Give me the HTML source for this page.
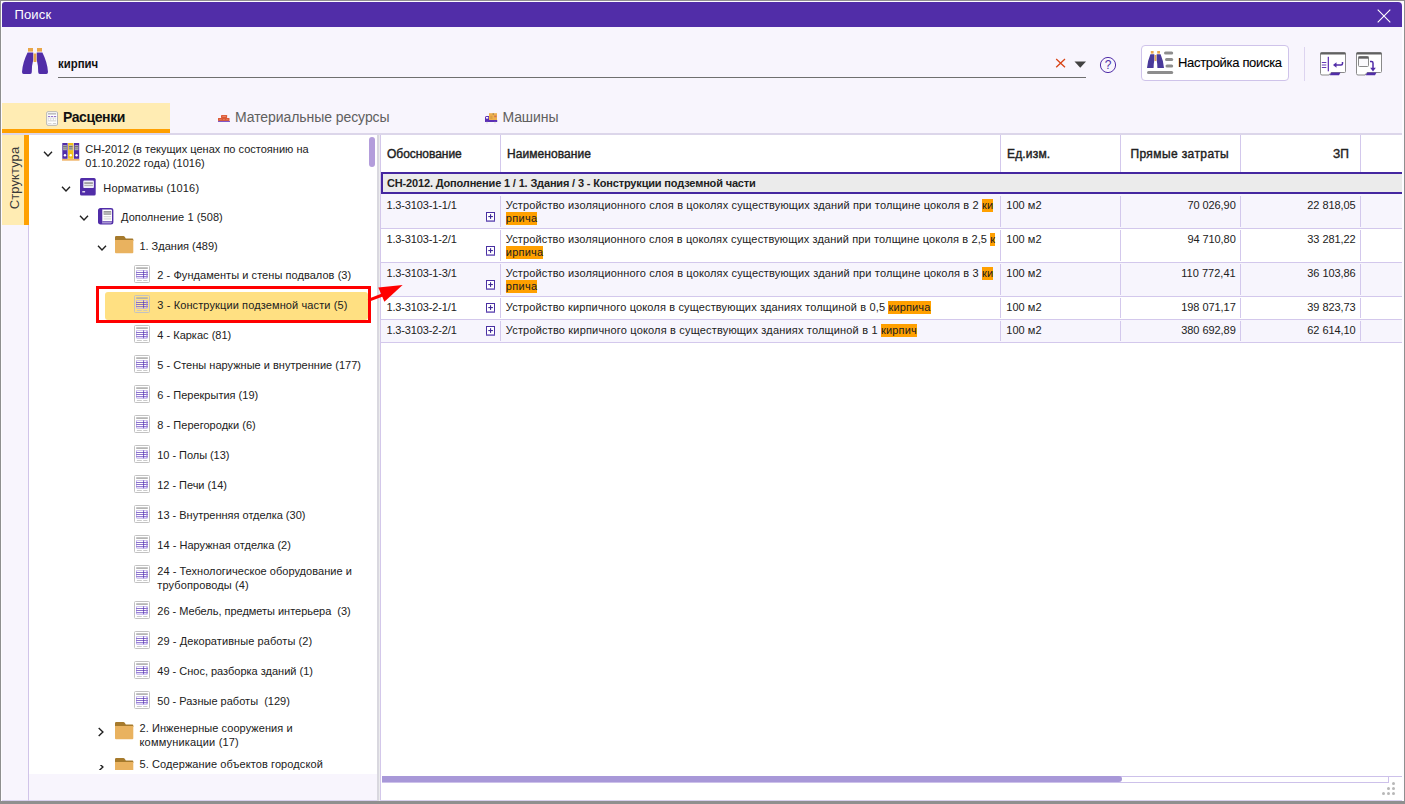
<!DOCTYPE html>
<html lang="ru">
<head>
<meta charset="utf-8">
<title>Поиск</title>
<style>
html,body{margin:0;padding:0;}
body{width:1405px;height:804px;overflow:hidden;position:relative;background:#8f8f8f;font-family:"Liberation Sans",sans-serif;color:#212121;}
.a{position:absolute;}
.t{position:absolute;white-space:pre;color:#212121;}
.hl{background:#ffa000;padding-bottom:1px;}
svg{position:absolute;overflow:visible;}
</style>
</head>
<body>
<div class="a" style="left:1px;top:1px;width:1403px;height:800px;background:#fdfcff;"></div>
<div class="a" style="left:2px;top:2px;width:1400px;height:799px;background:#f8f5fd;"></div>
<div class="a" style="left:2px;top:2px;width:1400px;height:25px;background:#512da8;border-radius:3px 4px 0 0;"></div>
<svg style="left:1377px;top:9px" width="14" height="14" viewBox="0 0 14 14"><path d="M0.7 0.7 L13.3 13.3 M13.3 0.7 L0.7 13.3" stroke="#fff" stroke-width="1.1" fill="none"/></svg>
<div class="a" style="left:2px;top:800px;width:1400px;height:1px;background:#d9d0ee;"></div>
<svg style="left:22px;top:48px" width="26" height="26" viewBox="0 0 26 26"><rect x="6" y="0" width="5" height="3.6" fill="#e8a64a"/><rect x="15" y="0" width="5" height="3.6" fill="#e8a64a"/>
<rect x="11.6" y="5.5" width="2.8" height="8.5" fill="#e8a64a"/>
<path d="M5.6 4.6 H11.2 V12 Q9.8 17 9.8 24 Q9.8 26 8.2 26 H1.6 Q0 26 0 24 Q0.6 14.500 5.6 4.6 Z" fill="#512da8"/>
<path d="M20.4 4.6 H14.8 V12 Q16.2 17 16.2 24 Q16.2 26 17.8 26 H24.4 Q26 26 26 24 Q25.4 14.500 20.4 4.6 Z" fill="#512da8"/></svg>
<div class="a" style="left:58px;top:77px;width:1028px;height:1px;background:#6f6f6f;"></div>
<svg style="left:1055px;top:58px" width="11" height="10" viewBox="0 0 11 10"><path d="M1.2 1 L10 9.2 M10 1 L1.2 9.2" stroke="#d84315" stroke-width="1.3" fill="none"/></svg>
<svg style="left:1074px;top:60.5px" width="13" height="7" viewBox="0 0 13 7"><path d="M0.5 0.5 H12 L6.25 6.8 Z" fill="#424242"/></svg>
<svg style="left:1099px;top:56px" width="18" height="18" viewBox="0 0 18 18"><circle cx="9" cy="9" r="7.6" fill="none" stroke="#512da8" stroke-width="1"/><text x="9" y="13.2" font-family="Liberation Sans, sans-serif" font-size="12" text-anchor="middle" fill="#512da8">?</text></svg>
<div class="a" style="left:1141px;top:45px;width:146px;height:34px;background:#fff;border:1px solid #cfc3ea;border-radius:4px;"></div>
<svg style="left:1147px;top:51px" width="27" height="24" viewBox="0 0 27 24"><rect x="3.8" y="0" width="2.8" height="2.6" fill="#e8a64a"/><rect x="10.2" y="0" width="2.8" height="2.6" fill="#e8a64a"/>
<rect x="7.6" y="4" width="1.8" height="6" fill="#e8a64a"/>
<path d="M3.4 3.2 H7.3 V9 Q6.6 13 6.6 17 H0 Q0.5 10 3.4 3.200 Z" fill="#4a3a9a"/>
<path d="M13.6 3.2 H9.7 V9 Q10.4 13 10.4 17 H17 Q16.500 10 13.600 3.200 Z" fill="#4a3a9a"/>
<rect x="17" y="0.5" width="9.2" height="3" rx="1.500" fill="#8d8d8d"/>
<rect x="18" y="7" width="8.2" height="3" rx="1.500" fill="#8d8d8d"/>
<rect x="18.5" y="13.500" width="7.7" height="3" rx="1.500" fill="#8d8d8d"/>
<rect x="0" y="20" width="26.2" height="3" rx="1.500" fill="#8d8d8d"/></svg>
<div class="a" style="left:1304px;top:47px;width:1px;height:34px;background:#ddd4f0;"></div>
<svg style="left:1320px;top:52px" width="26" height="24" viewBox="0 0 26 24"><path d="M0.5 2 Q0.5 0.5 2 0.5 H24 Q25.5 0.5 25.5 2 V19.5 Q25.5 20.5 24.5 20.5 H11 L9 23 H2 Q0.5 23 0.5 21.5 Z" fill="#fff" stroke="#8a8a8a" stroke-width="1"/>
<rect x="0.5" y="0.5" width="25" height="2" fill="#616161"/>
<path d="M11.500 20.500 H20.500 L19 23.3 H9.500 Z" fill="#512da8"/><rect x="7.700" y="4.800" width="1.300" height="14.500" fill="#673ab7"/>
<rect x="1.800" y="10" width="4.500" height="1" fill="#673ab7"/><rect x="1.800" y="12.500" width="4.500" height="1" fill="#673ab7"/><rect x="1.800" y="15" width="4.500" height="1" fill="#673ab7"/>
<path d="M22.500 10 V11.500 Q22.500 13 21 13 H16" stroke="#512da8" stroke-width="1.500" fill="none"/><path d="M13 13 L16.500 10.200 V15.800 Z" fill="#512da8"/></svg>
<svg style="left:1356px;top:52px" width="26" height="24" viewBox="0 0 26 24"><path d="M0.5 2 Q0.5 0.5 2 0.5 H24 Q25.5 0.5 25.5 2 V19.5 Q25.5 20.5 24.5 20.5 H11 L9 23 H2 Q0.5 23 0.5 21.5 Z" fill="#fff" stroke="#8a8a8a" stroke-width="1"/>
<rect x="0.5" y="0.5" width="25" height="2" fill="#616161"/>
<path d="M11.500 20.500 H20.500 L19 23.3 H9.500 Z" fill="#512da8"/><rect x="2.500" y="4.500" width="10" height="10" rx="1" fill="#fbfafd" stroke="#8a8a8a" stroke-width="1"/><rect x="2.500" y="4.500" width="10" height="2.200" fill="#616161"/>
<path d="M14 9.500 H15.500 Q17 9.500 17 11 V16" stroke="#512da8" stroke-width="1.500" fill="none"/><path d="M17 19.500 L14.200 15.800 H19.800 Z" fill="#512da8"/></svg>
<div class="a" style="left:2px;top:103px;width:168px;height:26px;background:#ffecb3;"></div>
<div class="a" style="left:2px;top:129px;width:168px;height:4px;background:#ffa000;"></div>
<div class="a" style="left:2px;top:133px;width:1400px;height:2px;background:#dcd6ea;"></div>
<svg style="left:46px;top:111px" width="12" height="15" viewBox="0 0 12 15"><rect x="0.700" y="0.700" width="10.800" height="13.600" rx="1.200" fill="#fff" stroke="#b4b4b4" stroke-width="1"/>
<rect x="2" y="2.200" width="8.200" height="1.300" fill="#b0b0b0"/>
<rect x="2" y="5" width="2.200" height="1" fill="#9575cd"/><rect x="5" y="5" width="2.200" height="1" fill="#9575cd"/><rect x="8" y="5" width="2.200" height="1" fill="#9575cd"/>
<rect x="2" y="6.500" width="8.200" height="4" fill="#dcdcdc"/>
<rect x="2.700" y="7.400" width="1.500" height="1.800" fill="#fff"/><rect x="5.300" y="7.400" width="1.500" height="1.800" fill="#fff"/><rect x="8" y="7.400" width="1.500" height="1.800" fill="#fff"/>
<rect x="2" y="12" width="3.500" height="0.800" fill="#d0d0d0"/><rect x="6.800" y="12" width="3.400" height="0.800" fill="#c4c4c4"/></svg>
<svg style="left:217.9px;top:115px" width="12" height="7" viewBox="0 0 12 7"><rect x="3" y="0" width="6.100" height="3" rx="0.400" fill="#dc5a36"/><rect x="4.300" y="0.900" width="3.600" height="0.700" fill="#f0a088"/>
<rect x="0" y="2.900" width="11.500" height="3.100" rx="0.400" fill="#dc5a36"/><rect x="1.200" y="4.200" width="2.400" height="0.600" fill="#ea8a70"/><rect x="5" y="4.200" width="1.800" height="0.600" fill="#ea8a70"/><rect x="8.200" y="4.200" width="2" height="0.600" fill="#ea8a70"/>
<rect x="0" y="5.900" width="12" height="1.100" fill="#8057c8"/></svg>
<svg style="left:485px;top:113px" width="12.5" height="11" viewBox="0 0 12.5 11"><rect x="4" y="0.200" width="8" height="6.800" fill="#eeb04e"/><rect x="5.300" y="2.800" width="2.200" height="3.200" fill="#d9a045"/><rect x="9.200" y="2.600" width="2.300" height="1.600" fill="#d0705a"/><rect x="7.700" y="0.200" width="1" height="1.600" fill="#8d7a55"/>
<path d="M0 4.500 Q0 3 1.500 3 H4 V7 H12.200 V9.100 H0 Z" fill="#5b2fb5"/><rect x="1" y="4" width="2.200" height="1.600" fill="#fbf9ff"/>
<circle cx="2" cy="9.700" r="1" fill="#e6e6e0"/><circle cx="10" cy="9.700" r="1" fill="#e6e6e0"/></svg>
<div class="a" style="left:2px;top:135px;width:27px;height:90px;background:#ffecb3;"></div>
<div class="a" style="left:24.2px;top:135px;width:4.8px;height:90px;background:#ffa000;"></div>
<div class="t" style="left:-17px;top:169.5px;width:64px;height:16px;font-size:13px;line-height:16px;text-align:center;letter-spacing:0.1px;color:#3a3a3a;transform:rotate(-90deg);transform-origin:50% 50%;">Структура</div>
<div class="a" style="left:28px;top:225px;width:1px;height:576px;background:#d1c4e9;"></div>
<div class="a" style="left:29px;top:135px;width:348px;height:638.5px;background:#fff;"></div>
<div class="a" style="left:369px;top:137px;width:6px;height:29.5px;background:#b39ddb;border-radius:3px;"></div>
<div class="a" style="left:377px;top:135px;width:2px;height:666px;background:#d9d8df;"></div>
<div class="a" style="left:379px;top:135px;width:1px;height:666px;background:#ececee;"></div>
<div class="a" style="left:380.5px;top:135px;width:1021.5px;height:665px;background:#fff;"></div>
<div class="a" style="left:380px;top:135px;width:1px;height:665px;background:#d3c7ea;"></div>
<div class="a" style="left:105px;top:291.6px;width:262.5px;height:28px;background:#ffe082;border-radius:3px;"></div>
<svg style="left:42.5px;top:150.3px" width="10" height="8" viewBox="0 0 10 8"><path d="M1 1.700 L5 5.900 L9 1.700" stroke="#212121" stroke-width="1.400" fill="none"/></svg>
<svg style="left:60.6px;top:185.3px" width="10" height="8" viewBox="0 0 10 8"><path d="M1 1.700 L5 5.900 L9 1.700" stroke="#212121" stroke-width="1.400" fill="none"/></svg>
<svg style="left:78.6px;top:214.4px" width="10" height="8" viewBox="0 0 10 8"><path d="M1 1.700 L5 5.900 L9 1.700" stroke="#212121" stroke-width="1.400" fill="none"/></svg>
<svg style="left:96.6px;top:243.5px" width="10" height="8" viewBox="0 0 10 8"><path d="M1 1.700 L5 5.900 L9 1.700" stroke="#212121" stroke-width="1.400" fill="none"/></svg>
<svg style="left:96.7px;top:727.4px" width="8" height="10" viewBox="0 0 8 10"><path d="M1.700 1 L5.900 5 L1.700 9" stroke="#212121" stroke-width="1.400" fill="none"/></svg>
<div class="a" style="left:96px;top:764.600px;width:10px;height:5.400px;overflow:hidden;"><svg style="left:0.700px;top:-3.100px" width="8" height="10" viewBox="0 0 8 10"><path d="M1.700 1 L5.900 5 L1.700 9" stroke="#212121" stroke-width="1.400" fill="none"/></svg></div>
<svg style="left:61.5px;top:143px" width="17.5" height="18" viewBox="0 0 17.5 18"><rect x="0.3" y="0" width="5.300" height="15.800" fill="#512da8"/><rect x="6.100" y="0" width="5.300" height="15.800" fill="#f2c21a"/><rect x="11.900" y="0" width="5.300" height="15.800" fill="#512da8"/>
<rect x="1.100" y="2.200" width="3.700" height="5" fill="#bdbdbd"/><rect x="6.900" y="2.200" width="3.700" height="5" fill="#bdbdbd"/><rect x="12.700" y="2.200" width="3.700" height="5" fill="#bdbdbd"/>
<rect x="1.100" y="3.200" width="3.700" height="1.100" fill="#616161"/><rect x="6.900" y="3.200" width="3.700" height="1.100" fill="#616161"/><rect x="12.700" y="3.200" width="3.700" height="1.100" fill="#616161"/>
<rect x="1.100" y="5.400" width="3.700" height="0.900" fill="#757575"/><rect x="6.900" y="5.400" width="3.700" height="0.900" fill="#757575"/><rect x="12.700" y="5.400" width="3.700" height="0.900" fill="#757575"/>
<circle cx="2.950" cy="12.300" r="1.200" fill="#fff"/><circle cx="8.750" cy="12.300" r="1.200" fill="#fff"/><circle cx="14.550" cy="12.300" r="1.200" fill="#fff"/>
<rect x="0" y="16" width="17.500" height="1.700" fill="#f0b468"/></svg>
<svg style="left:79.6px;top:178px" width="16" height="17.5" viewBox="0 0 16 17.5"><rect x="0" y="0" width="15.700" height="17.400" rx="1.500" fill="#512da8"/>
<rect x="3.300" y="2.600" width="10.600" height="7.400" rx="0.800" fill="#f1effa"/><rect x="4.300" y="4.300" width="8.600" height="1.500" fill="#8c8c8c"/><rect x="4.300" y="6.800" width="8.600" height="1.300" fill="#b5b5b5"/>
<rect x="2.300" y="13.200" width="2.800" height="1.200" fill="#fff"/></svg>
<svg style="left:98.2px;top:207.8px" width="15.5" height="16.8" viewBox="0 0 15.5 16.8"><rect x="0.700" y="0.700" width="14" height="15.200" rx="1.800" fill="#fff" stroke="#512da8" stroke-width="1.400"/>
<rect x="0.700" y="0.700" width="3.600" height="15.200" rx="1.200" fill="#512da8"/>
<rect x="5.600" y="3" width="7.600" height="3.800" fill="#9a9a9a"/><rect x="5.600" y="4.600" width="7.600" height="0.800" fill="#dcdcdc"/>
<rect x="5.600" y="8.300" width="7.600" height="0.900" fill="#c9c9c9"/><rect x="5.600" y="10.500" width="7.600" height="0.900" fill="#c9c9c9"/>
<rect x="4.300" y="13.300" width="10" height="1.200" fill="#512da8"/></svg>
<svg style="left:114.8px;top:235.9px" width="18.5" height="17.5" viewBox="0 0 18.5 17.5"><path d="M0 1.200 Q0 0 1.200 0 H8.300 Q9.300 0 9.900 1 L10.800 2.400 H17.300 Q18.300 2.400 18.300 3.400 V5 H0 Z" fill="#a67a2c"/>
<path d="M0 4 H18.300 V16.200 Q18.300 17.200 17.300 17.200 H1 Q0 17.200 0 16.200 Z" fill="#e9b25f"/></svg>
<svg style="left:114.8px;top:721.9px" width="18.5" height="17.5" viewBox="0 0 18.5 17.5"><path d="M0 1.200 Q0 0 1.200 0 H8.300 Q9.300 0 9.900 1 L10.800 2.400 H17.300 Q18.300 2.400 18.300 3.400 V5 H0 Z" fill="#a67a2c"/>
<path d="M0 4 H18.300 V16.200 Q18.300 17.200 17.300 17.200 H1 Q0 17.200 0 16.200 Z" fill="#e9b25f"/></svg>
<div class="a" style="left:114.800px;top:758.100px;width:19px;height:11.700px;overflow:hidden;"><svg style="left:0;top:0" width="18.500" height="17.500" viewBox="0 0 18.500 17.500"><path d="M0 1.200 Q0 0 1.200 0 H8.300 Q9.300 0 9.900 1 L10.800 2.400 H17.300 Q18.300 2.400 18.300 3.400 V5 H0 Z" fill="#a67a2c"/><path d="M0 4 H18.300 V16.200 Q18.300 17.200 17.300 17.200 H1 Q0 17.200 0 16.200 Z" fill="#e9b25f"/></svg></div>
<svg style="left:134px;top:265px" width="16" height="18" viewBox="0 0 16 18"><rect x="0.500" y="0.500" width="15" height="17" rx="1" fill="#fff" stroke="#c2c2c2" stroke-width="1"/>
<rect x="2.200" y="2.300" width="11.600" height="1.600" fill="#adadad"/>
<rect x="2.100" y="4.900" width="11.800" height="8.800" rx="1.200" fill="#bfb0ea"/>
<rect x="2.300" y="7.100" width="11.400" height="0.800" fill="#5e3cb6"/><rect x="2.300" y="9.100" width="11.400" height="0.800" fill="#5e3cb6"/><rect x="2.300" y="11.100" width="11.400" height="0.800" fill="#7657c6"/>
<rect x="9.200" y="5.400" width="0.900" height="7.800" fill="#5e3cb6"/><rect x="12.400" y="6" width="0.700" height="7" fill="#9a84da"/>
<rect x="3" y="5.700" width="6.200" height="1.400" fill="#fff"/><rect x="10.100" y="5.700" width="2.300" height="1.400" fill="#fff"/>
<rect x="3" y="7.900" width="6.200" height="1.200" fill="#fff"/><rect x="10.100" y="7.900" width="2.300" height="1.200" fill="#fff"/>
<rect x="3" y="9.900" width="6.200" height="1.200" fill="#fff"/><rect x="10.100" y="9.900" width="2.300" height="1.200" fill="#fff"/>
<rect x="3" y="11.900" width="6.200" height="0.900" fill="#e9e2f9"/><rect x="10.100" y="11.900" width="2.300" height="0.900" fill="#e9e2f9"/>
<rect x="2.800" y="15" width="5" height="0.900" fill="#c6c6c6"/><rect x="9.200" y="15" width="4.200" height="0.900" fill="#c6c6c6"/></svg>
<svg style="left:134px;top:295px" width="16" height="18" viewBox="0 0 16 18"><rect x="0.500" y="0.500" width="15" height="17" rx="1" fill="none" stroke="#c2c2c2" stroke-width="1"/>
<rect x="2.200" y="2.300" width="11.600" height="1.600" fill="#adadad"/>
<rect x="2.100" y="4.900" width="11.800" height="8.800" rx="1.200" fill="#bfb0ea"/>
<rect x="2.300" y="7.100" width="11.400" height="0.800" fill="#5e3cb6"/><rect x="2.300" y="9.100" width="11.400" height="0.800" fill="#5e3cb6"/><rect x="2.300" y="11.100" width="11.400" height="0.800" fill="#7657c6"/>
<rect x="9.200" y="5.400" width="0.900" height="7.800" fill="#5e3cb6"/><rect x="12.400" y="6" width="0.700" height="7" fill="#9a84da"/>
<rect x="3" y="5.700" width="6.200" height="1.400" fill="#ffe9a0"/><rect x="10.100" y="5.700" width="2.300" height="1.400" fill="#ffe9a0"/>
<rect x="3" y="7.900" width="6.200" height="1.200" fill="#ffe9a0"/><rect x="10.100" y="7.900" width="2.300" height="1.200" fill="#ffe9a0"/>
<rect x="3" y="9.900" width="6.200" height="1.200" fill="#ffe9a0"/><rect x="10.100" y="9.900" width="2.300" height="1.200" fill="#ffe9a0"/>
<rect x="3" y="11.900" width="6.200" height="0.900" fill="#f3dc9a"/><rect x="10.100" y="11.900" width="2.300" height="0.900" fill="#f3dc9a"/>
<rect x="2.800" y="15" width="5" height="0.900" fill="#c6c6c6"/><rect x="9.200" y="15" width="4.200" height="0.900" fill="#c6c6c6"/></svg>
<svg style="left:134px;top:325px" width="16" height="18" viewBox="0 0 16 18"><rect x="0.500" y="0.500" width="15" height="17" rx="1" fill="#fff" stroke="#c2c2c2" stroke-width="1"/>
<rect x="2.200" y="2.300" width="11.600" height="1.600" fill="#adadad"/>
<rect x="2.100" y="4.900" width="11.800" height="8.800" rx="1.200" fill="#bfb0ea"/>
<rect x="2.300" y="7.100" width="11.400" height="0.800" fill="#5e3cb6"/><rect x="2.300" y="9.100" width="11.400" height="0.800" fill="#5e3cb6"/><rect x="2.300" y="11.100" width="11.400" height="0.800" fill="#7657c6"/>
<rect x="9.200" y="5.400" width="0.900" height="7.800" fill="#5e3cb6"/><rect x="12.400" y="6" width="0.700" height="7" fill="#9a84da"/>
<rect x="3" y="5.700" width="6.200" height="1.400" fill="#fff"/><rect x="10.100" y="5.700" width="2.300" height="1.400" fill="#fff"/>
<rect x="3" y="7.900" width="6.200" height="1.200" fill="#fff"/><rect x="10.100" y="7.900" width="2.300" height="1.200" fill="#fff"/>
<rect x="3" y="9.900" width="6.200" height="1.200" fill="#fff"/><rect x="10.100" y="9.900" width="2.300" height="1.200" fill="#fff"/>
<rect x="3" y="11.900" width="6.200" height="0.900" fill="#e9e2f9"/><rect x="10.100" y="11.900" width="2.300" height="0.900" fill="#e9e2f9"/>
<rect x="2.800" y="15" width="5" height="0.900" fill="#c6c6c6"/><rect x="9.200" y="15" width="4.200" height="0.900" fill="#c6c6c6"/></svg>
<svg style="left:134px;top:355px" width="16" height="18" viewBox="0 0 16 18"><rect x="0.500" y="0.500" width="15" height="17" rx="1" fill="#fff" stroke="#c2c2c2" stroke-width="1"/>
<rect x="2.200" y="2.300" width="11.600" height="1.600" fill="#adadad"/>
<rect x="2.100" y="4.900" width="11.800" height="8.800" rx="1.200" fill="#bfb0ea"/>
<rect x="2.300" y="7.100" width="11.400" height="0.800" fill="#5e3cb6"/><rect x="2.300" y="9.100" width="11.400" height="0.800" fill="#5e3cb6"/><rect x="2.300" y="11.100" width="11.400" height="0.800" fill="#7657c6"/>
<rect x="9.200" y="5.400" width="0.900" height="7.800" fill="#5e3cb6"/><rect x="12.400" y="6" width="0.700" height="7" fill="#9a84da"/>
<rect x="3" y="5.700" width="6.200" height="1.400" fill="#fff"/><rect x="10.100" y="5.700" width="2.300" height="1.400" fill="#fff"/>
<rect x="3" y="7.900" width="6.200" height="1.200" fill="#fff"/><rect x="10.100" y="7.900" width="2.300" height="1.200" fill="#fff"/>
<rect x="3" y="9.900" width="6.200" height="1.200" fill="#fff"/><rect x="10.100" y="9.900" width="2.300" height="1.200" fill="#fff"/>
<rect x="3" y="11.900" width="6.200" height="0.900" fill="#e9e2f9"/><rect x="10.100" y="11.900" width="2.300" height="0.900" fill="#e9e2f9"/>
<rect x="2.800" y="15" width="5" height="0.900" fill="#c6c6c6"/><rect x="9.200" y="15" width="4.200" height="0.900" fill="#c6c6c6"/></svg>
<svg style="left:134px;top:385px" width="16" height="18" viewBox="0 0 16 18"><rect x="0.500" y="0.500" width="15" height="17" rx="1" fill="#fff" stroke="#c2c2c2" stroke-width="1"/>
<rect x="2.200" y="2.300" width="11.600" height="1.600" fill="#adadad"/>
<rect x="2.100" y="4.900" width="11.800" height="8.800" rx="1.200" fill="#bfb0ea"/>
<rect x="2.300" y="7.100" width="11.400" height="0.800" fill="#5e3cb6"/><rect x="2.300" y="9.100" width="11.400" height="0.800" fill="#5e3cb6"/><rect x="2.300" y="11.100" width="11.400" height="0.800" fill="#7657c6"/>
<rect x="9.200" y="5.400" width="0.900" height="7.800" fill="#5e3cb6"/><rect x="12.400" y="6" width="0.700" height="7" fill="#9a84da"/>
<rect x="3" y="5.700" width="6.200" height="1.400" fill="#fff"/><rect x="10.100" y="5.700" width="2.300" height="1.400" fill="#fff"/>
<rect x="3" y="7.900" width="6.200" height="1.200" fill="#fff"/><rect x="10.100" y="7.900" width="2.300" height="1.200" fill="#fff"/>
<rect x="3" y="9.900" width="6.200" height="1.200" fill="#fff"/><rect x="10.100" y="9.900" width="2.300" height="1.200" fill="#fff"/>
<rect x="3" y="11.900" width="6.200" height="0.900" fill="#e9e2f9"/><rect x="10.100" y="11.900" width="2.300" height="0.900" fill="#e9e2f9"/>
<rect x="2.800" y="15" width="5" height="0.900" fill="#c6c6c6"/><rect x="9.200" y="15" width="4.200" height="0.900" fill="#c6c6c6"/></svg>
<svg style="left:134px;top:415px" width="16" height="18" viewBox="0 0 16 18"><rect x="0.500" y="0.500" width="15" height="17" rx="1" fill="#fff" stroke="#c2c2c2" stroke-width="1"/>
<rect x="2.200" y="2.300" width="11.600" height="1.600" fill="#adadad"/>
<rect x="2.100" y="4.900" width="11.800" height="8.800" rx="1.200" fill="#bfb0ea"/>
<rect x="2.300" y="7.100" width="11.400" height="0.800" fill="#5e3cb6"/><rect x="2.300" y="9.100" width="11.400" height="0.800" fill="#5e3cb6"/><rect x="2.300" y="11.100" width="11.400" height="0.800" fill="#7657c6"/>
<rect x="9.200" y="5.400" width="0.900" height="7.800" fill="#5e3cb6"/><rect x="12.400" y="6" width="0.700" height="7" fill="#9a84da"/>
<rect x="3" y="5.700" width="6.200" height="1.400" fill="#fff"/><rect x="10.100" y="5.700" width="2.300" height="1.400" fill="#fff"/>
<rect x="3" y="7.900" width="6.200" height="1.200" fill="#fff"/><rect x="10.100" y="7.900" width="2.300" height="1.200" fill="#fff"/>
<rect x="3" y="9.900" width="6.200" height="1.200" fill="#fff"/><rect x="10.100" y="9.900" width="2.300" height="1.200" fill="#fff"/>
<rect x="3" y="11.900" width="6.200" height="0.900" fill="#e9e2f9"/><rect x="10.100" y="11.900" width="2.300" height="0.900" fill="#e9e2f9"/>
<rect x="2.800" y="15" width="5" height="0.900" fill="#c6c6c6"/><rect x="9.200" y="15" width="4.200" height="0.900" fill="#c6c6c6"/></svg>
<svg style="left:134px;top:445px" width="16" height="18" viewBox="0 0 16 18"><rect x="0.500" y="0.500" width="15" height="17" rx="1" fill="#fff" stroke="#c2c2c2" stroke-width="1"/>
<rect x="2.200" y="2.300" width="11.600" height="1.600" fill="#adadad"/>
<rect x="2.100" y="4.900" width="11.800" height="8.800" rx="1.200" fill="#bfb0ea"/>
<rect x="2.300" y="7.100" width="11.400" height="0.800" fill="#5e3cb6"/><rect x="2.300" y="9.100" width="11.400" height="0.800" fill="#5e3cb6"/><rect x="2.300" y="11.100" width="11.400" height="0.800" fill="#7657c6"/>
<rect x="9.200" y="5.400" width="0.900" height="7.800" fill="#5e3cb6"/><rect x="12.400" y="6" width="0.700" height="7" fill="#9a84da"/>
<rect x="3" y="5.700" width="6.200" height="1.400" fill="#fff"/><rect x="10.100" y="5.700" width="2.300" height="1.400" fill="#fff"/>
<rect x="3" y="7.900" width="6.200" height="1.200" fill="#fff"/><rect x="10.100" y="7.900" width="2.300" height="1.200" fill="#fff"/>
<rect x="3" y="9.900" width="6.200" height="1.200" fill="#fff"/><rect x="10.100" y="9.900" width="2.300" height="1.200" fill="#fff"/>
<rect x="3" y="11.900" width="6.200" height="0.900" fill="#e9e2f9"/><rect x="10.100" y="11.900" width="2.300" height="0.900" fill="#e9e2f9"/>
<rect x="2.800" y="15" width="5" height="0.900" fill="#c6c6c6"/><rect x="9.200" y="15" width="4.200" height="0.900" fill="#c6c6c6"/></svg>
<svg style="left:134px;top:475px" width="16" height="18" viewBox="0 0 16 18"><rect x="0.500" y="0.500" width="15" height="17" rx="1" fill="#fff" stroke="#c2c2c2" stroke-width="1"/>
<rect x="2.200" y="2.300" width="11.600" height="1.600" fill="#adadad"/>
<rect x="2.100" y="4.900" width="11.800" height="8.800" rx="1.200" fill="#bfb0ea"/>
<rect x="2.300" y="7.100" width="11.400" height="0.800" fill="#5e3cb6"/><rect x="2.300" y="9.100" width="11.400" height="0.800" fill="#5e3cb6"/><rect x="2.300" y="11.100" width="11.400" height="0.800" fill="#7657c6"/>
<rect x="9.200" y="5.400" width="0.900" height="7.800" fill="#5e3cb6"/><rect x="12.400" y="6" width="0.700" height="7" fill="#9a84da"/>
<rect x="3" y="5.700" width="6.200" height="1.400" fill="#fff"/><rect x="10.100" y="5.700" width="2.300" height="1.400" fill="#fff"/>
<rect x="3" y="7.900" width="6.200" height="1.200" fill="#fff"/><rect x="10.100" y="7.900" width="2.300" height="1.200" fill="#fff"/>
<rect x="3" y="9.900" width="6.200" height="1.200" fill="#fff"/><rect x="10.100" y="9.900" width="2.300" height="1.200" fill="#fff"/>
<rect x="3" y="11.900" width="6.200" height="0.900" fill="#e9e2f9"/><rect x="10.100" y="11.900" width="2.300" height="0.900" fill="#e9e2f9"/>
<rect x="2.800" y="15" width="5" height="0.900" fill="#c6c6c6"/><rect x="9.200" y="15" width="4.200" height="0.900" fill="#c6c6c6"/></svg>
<svg style="left:134px;top:505px" width="16" height="18" viewBox="0 0 16 18"><rect x="0.500" y="0.500" width="15" height="17" rx="1" fill="#fff" stroke="#c2c2c2" stroke-width="1"/>
<rect x="2.200" y="2.300" width="11.600" height="1.600" fill="#adadad"/>
<rect x="2.100" y="4.900" width="11.800" height="8.800" rx="1.200" fill="#bfb0ea"/>
<rect x="2.300" y="7.100" width="11.400" height="0.800" fill="#5e3cb6"/><rect x="2.300" y="9.100" width="11.400" height="0.800" fill="#5e3cb6"/><rect x="2.300" y="11.100" width="11.400" height="0.800" fill="#7657c6"/>
<rect x="9.200" y="5.400" width="0.900" height="7.800" fill="#5e3cb6"/><rect x="12.400" y="6" width="0.700" height="7" fill="#9a84da"/>
<rect x="3" y="5.700" width="6.200" height="1.400" fill="#fff"/><rect x="10.100" y="5.700" width="2.300" height="1.400" fill="#fff"/>
<rect x="3" y="7.900" width="6.200" height="1.200" fill="#fff"/><rect x="10.100" y="7.900" width="2.300" height="1.200" fill="#fff"/>
<rect x="3" y="9.900" width="6.200" height="1.200" fill="#fff"/><rect x="10.100" y="9.900" width="2.300" height="1.200" fill="#fff"/>
<rect x="3" y="11.900" width="6.200" height="0.900" fill="#e9e2f9"/><rect x="10.100" y="11.900" width="2.300" height="0.900" fill="#e9e2f9"/>
<rect x="2.800" y="15" width="5" height="0.900" fill="#c6c6c6"/><rect x="9.200" y="15" width="4.200" height="0.900" fill="#c6c6c6"/></svg>
<svg style="left:134px;top:535px" width="16" height="18" viewBox="0 0 16 18"><rect x="0.500" y="0.500" width="15" height="17" rx="1" fill="#fff" stroke="#c2c2c2" stroke-width="1"/>
<rect x="2.200" y="2.300" width="11.600" height="1.600" fill="#adadad"/>
<rect x="2.100" y="4.900" width="11.800" height="8.800" rx="1.200" fill="#bfb0ea"/>
<rect x="2.300" y="7.100" width="11.400" height="0.800" fill="#5e3cb6"/><rect x="2.300" y="9.100" width="11.400" height="0.800" fill="#5e3cb6"/><rect x="2.300" y="11.100" width="11.400" height="0.800" fill="#7657c6"/>
<rect x="9.200" y="5.400" width="0.900" height="7.800" fill="#5e3cb6"/><rect x="12.400" y="6" width="0.700" height="7" fill="#9a84da"/>
<rect x="3" y="5.700" width="6.200" height="1.400" fill="#fff"/><rect x="10.100" y="5.700" width="2.300" height="1.400" fill="#fff"/>
<rect x="3" y="7.900" width="6.200" height="1.200" fill="#fff"/><rect x="10.100" y="7.900" width="2.300" height="1.200" fill="#fff"/>
<rect x="3" y="9.900" width="6.200" height="1.200" fill="#fff"/><rect x="10.100" y="9.900" width="2.300" height="1.200" fill="#fff"/>
<rect x="3" y="11.900" width="6.200" height="0.900" fill="#e9e2f9"/><rect x="10.100" y="11.900" width="2.300" height="0.900" fill="#e9e2f9"/>
<rect x="2.800" y="15" width="5" height="0.900" fill="#c6c6c6"/><rect x="9.200" y="15" width="4.200" height="0.900" fill="#c6c6c6"/></svg>
<svg style="left:134px;top:565px" width="16" height="18" viewBox="0 0 16 18"><rect x="0.500" y="0.500" width="15" height="17" rx="1" fill="#fff" stroke="#c2c2c2" stroke-width="1"/>
<rect x="2.200" y="2.300" width="11.600" height="1.600" fill="#adadad"/>
<rect x="2.100" y="4.900" width="11.800" height="8.800" rx="1.200" fill="#bfb0ea"/>
<rect x="2.300" y="7.100" width="11.400" height="0.800" fill="#5e3cb6"/><rect x="2.300" y="9.100" width="11.400" height="0.800" fill="#5e3cb6"/><rect x="2.300" y="11.100" width="11.400" height="0.800" fill="#7657c6"/>
<rect x="9.200" y="5.400" width="0.900" height="7.800" fill="#5e3cb6"/><rect x="12.400" y="6" width="0.700" height="7" fill="#9a84da"/>
<rect x="3" y="5.700" width="6.200" height="1.400" fill="#fff"/><rect x="10.100" y="5.700" width="2.300" height="1.400" fill="#fff"/>
<rect x="3" y="7.900" width="6.200" height="1.200" fill="#fff"/><rect x="10.100" y="7.900" width="2.300" height="1.200" fill="#fff"/>
<rect x="3" y="9.900" width="6.200" height="1.200" fill="#fff"/><rect x="10.100" y="9.900" width="2.300" height="1.200" fill="#fff"/>
<rect x="3" y="11.900" width="6.200" height="0.900" fill="#e9e2f9"/><rect x="10.100" y="11.900" width="2.300" height="0.900" fill="#e9e2f9"/>
<rect x="2.800" y="15" width="5" height="0.900" fill="#c6c6c6"/><rect x="9.200" y="15" width="4.200" height="0.900" fill="#c6c6c6"/></svg>
<svg style="left:134px;top:601px" width="16" height="18" viewBox="0 0 16 18"><rect x="0.500" y="0.500" width="15" height="17" rx="1" fill="#fff" stroke="#c2c2c2" stroke-width="1"/>
<rect x="2.200" y="2.300" width="11.600" height="1.600" fill="#adadad"/>
<rect x="2.100" y="4.900" width="11.800" height="8.800" rx="1.200" fill="#bfb0ea"/>
<rect x="2.300" y="7.100" width="11.400" height="0.800" fill="#5e3cb6"/><rect x="2.300" y="9.100" width="11.400" height="0.800" fill="#5e3cb6"/><rect x="2.300" y="11.100" width="11.400" height="0.800" fill="#7657c6"/>
<rect x="9.200" y="5.400" width="0.900" height="7.800" fill="#5e3cb6"/><rect x="12.400" y="6" width="0.700" height="7" fill="#9a84da"/>
<rect x="3" y="5.700" width="6.200" height="1.400" fill="#fff"/><rect x="10.100" y="5.700" width="2.300" height="1.400" fill="#fff"/>
<rect x="3" y="7.900" width="6.200" height="1.200" fill="#fff"/><rect x="10.100" y="7.900" width="2.300" height="1.200" fill="#fff"/>
<rect x="3" y="9.900" width="6.200" height="1.200" fill="#fff"/><rect x="10.100" y="9.900" width="2.300" height="1.200" fill="#fff"/>
<rect x="3" y="11.900" width="6.200" height="0.900" fill="#e9e2f9"/><rect x="10.100" y="11.900" width="2.300" height="0.900" fill="#e9e2f9"/>
<rect x="2.800" y="15" width="5" height="0.900" fill="#c6c6c6"/><rect x="9.200" y="15" width="4.200" height="0.900" fill="#c6c6c6"/></svg>
<svg style="left:134px;top:631px" width="16" height="18" viewBox="0 0 16 18"><rect x="0.500" y="0.500" width="15" height="17" rx="1" fill="#fff" stroke="#c2c2c2" stroke-width="1"/>
<rect x="2.200" y="2.300" width="11.600" height="1.600" fill="#adadad"/>
<rect x="2.100" y="4.900" width="11.800" height="8.800" rx="1.200" fill="#bfb0ea"/>
<rect x="2.300" y="7.100" width="11.400" height="0.800" fill="#5e3cb6"/><rect x="2.300" y="9.100" width="11.400" height="0.800" fill="#5e3cb6"/><rect x="2.300" y="11.100" width="11.400" height="0.800" fill="#7657c6"/>
<rect x="9.200" y="5.400" width="0.900" height="7.800" fill="#5e3cb6"/><rect x="12.400" y="6" width="0.700" height="7" fill="#9a84da"/>
<rect x="3" y="5.700" width="6.200" height="1.400" fill="#fff"/><rect x="10.100" y="5.700" width="2.300" height="1.400" fill="#fff"/>
<rect x="3" y="7.900" width="6.200" height="1.200" fill="#fff"/><rect x="10.100" y="7.900" width="2.300" height="1.200" fill="#fff"/>
<rect x="3" y="9.900" width="6.200" height="1.200" fill="#fff"/><rect x="10.100" y="9.900" width="2.300" height="1.200" fill="#fff"/>
<rect x="3" y="11.900" width="6.200" height="0.900" fill="#e9e2f9"/><rect x="10.100" y="11.900" width="2.300" height="0.900" fill="#e9e2f9"/>
<rect x="2.800" y="15" width="5" height="0.900" fill="#c6c6c6"/><rect x="9.200" y="15" width="4.200" height="0.900" fill="#c6c6c6"/></svg>
<svg style="left:134px;top:661px" width="16" height="18" viewBox="0 0 16 18"><rect x="0.500" y="0.500" width="15" height="17" rx="1" fill="#fff" stroke="#c2c2c2" stroke-width="1"/>
<rect x="2.200" y="2.300" width="11.600" height="1.600" fill="#adadad"/>
<rect x="2.100" y="4.900" width="11.800" height="8.800" rx="1.200" fill="#bfb0ea"/>
<rect x="2.300" y="7.100" width="11.400" height="0.800" fill="#5e3cb6"/><rect x="2.300" y="9.100" width="11.400" height="0.800" fill="#5e3cb6"/><rect x="2.300" y="11.100" width="11.400" height="0.800" fill="#7657c6"/>
<rect x="9.200" y="5.400" width="0.900" height="7.800" fill="#5e3cb6"/><rect x="12.400" y="6" width="0.700" height="7" fill="#9a84da"/>
<rect x="3" y="5.700" width="6.200" height="1.400" fill="#fff"/><rect x="10.100" y="5.700" width="2.300" height="1.400" fill="#fff"/>
<rect x="3" y="7.900" width="6.200" height="1.200" fill="#fff"/><rect x="10.100" y="7.900" width="2.300" height="1.200" fill="#fff"/>
<rect x="3" y="9.900" width="6.200" height="1.200" fill="#fff"/><rect x="10.100" y="9.900" width="2.300" height="1.200" fill="#fff"/>
<rect x="3" y="11.900" width="6.200" height="0.900" fill="#e9e2f9"/><rect x="10.100" y="11.900" width="2.300" height="0.900" fill="#e9e2f9"/>
<rect x="2.800" y="15" width="5" height="0.900" fill="#c6c6c6"/><rect x="9.200" y="15" width="4.200" height="0.900" fill="#c6c6c6"/></svg>
<svg style="left:134px;top:691px" width="16" height="18" viewBox="0 0 16 18"><rect x="0.500" y="0.500" width="15" height="17" rx="1" fill="#fff" stroke="#c2c2c2" stroke-width="1"/>
<rect x="2.200" y="2.300" width="11.600" height="1.600" fill="#adadad"/>
<rect x="2.100" y="4.900" width="11.800" height="8.800" rx="1.200" fill="#bfb0ea"/>
<rect x="2.300" y="7.100" width="11.400" height="0.800" fill="#5e3cb6"/><rect x="2.300" y="9.100" width="11.400" height="0.800" fill="#5e3cb6"/><rect x="2.300" y="11.100" width="11.400" height="0.800" fill="#7657c6"/>
<rect x="9.200" y="5.400" width="0.900" height="7.800" fill="#5e3cb6"/><rect x="12.400" y="6" width="0.700" height="7" fill="#9a84da"/>
<rect x="3" y="5.700" width="6.200" height="1.400" fill="#fff"/><rect x="10.100" y="5.700" width="2.300" height="1.400" fill="#fff"/>
<rect x="3" y="7.900" width="6.200" height="1.200" fill="#fff"/><rect x="10.100" y="7.900" width="2.300" height="1.200" fill="#fff"/>
<rect x="3" y="9.900" width="6.200" height="1.200" fill="#fff"/><rect x="10.100" y="9.900" width="2.300" height="1.200" fill="#fff"/>
<rect x="3" y="11.900" width="6.200" height="0.900" fill="#e9e2f9"/><rect x="10.100" y="11.900" width="2.300" height="0.900" fill="#e9e2f9"/>
<rect x="2.800" y="15" width="5" height="0.900" fill="#c6c6c6"/><rect x="9.200" y="15" width="4.200" height="0.900" fill="#c6c6c6"/></svg>
<div class="a" style="left:381px;top:194px;width:1021px;height:34px;background:#f7f5fd;"></div>
<div class="a" style="left:381px;top:228px;width:1021px;height:1px;background:#d3c8ec;"></div>
<div class="a" style="left:381px;top:262px;width:1021px;height:1px;background:#d3c8ec;"></div>
<div class="a" style="left:381px;top:263px;width:1021px;height:33px;background:#f7f5fd;"></div>
<div class="a" style="left:381px;top:296px;width:1021px;height:1px;background:#d3c8ec;"></div>
<div class="a" style="left:381px;top:319px;width:1021px;height:1px;background:#d3c8ec;"></div>
<div class="a" style="left:381px;top:320px;width:1021px;height:22px;background:#f7f5fd;"></div>
<div class="a" style="left:381px;top:342px;width:1021px;height:1px;background:#d3c8ec;"></div>
<div class="a" style="left:500px;top:135px;width:1px;height:37px;background:#d3c8ec;"></div>
<div class="a" style="left:500px;top:196px;width:1px;height:31px;background:#d3c8ec;"></div>
<div class="a" style="left:500px;top:230px;width:1px;height:31px;background:#d3c8ec;"></div>
<div class="a" style="left:500px;top:264px;width:1px;height:31px;background:#d3c8ec;"></div>
<div class="a" style="left:500px;top:298px;width:1px;height:20px;background:#d3c8ec;"></div>
<div class="a" style="left:500px;top:321px;width:1px;height:20px;background:#d3c8ec;"></div>
<div class="a" style="left:1000px;top:135px;width:1px;height:37px;background:#d3c8ec;"></div>
<div class="a" style="left:1000px;top:196px;width:1px;height:31px;background:#d3c8ec;"></div>
<div class="a" style="left:1000px;top:230px;width:1px;height:31px;background:#d3c8ec;"></div>
<div class="a" style="left:1000px;top:264px;width:1px;height:31px;background:#d3c8ec;"></div>
<div class="a" style="left:1000px;top:298px;width:1px;height:20px;background:#d3c8ec;"></div>
<div class="a" style="left:1000px;top:321px;width:1px;height:20px;background:#d3c8ec;"></div>
<div class="a" style="left:1120px;top:135px;width:1px;height:37px;background:#d3c8ec;"></div>
<div class="a" style="left:1120px;top:196px;width:1px;height:31px;background:#d3c8ec;"></div>
<div class="a" style="left:1120px;top:230px;width:1px;height:31px;background:#d3c8ec;"></div>
<div class="a" style="left:1120px;top:264px;width:1px;height:31px;background:#d3c8ec;"></div>
<div class="a" style="left:1120px;top:298px;width:1px;height:20px;background:#d3c8ec;"></div>
<div class="a" style="left:1120px;top:321px;width:1px;height:20px;background:#d3c8ec;"></div>
<div class="a" style="left:1240px;top:135px;width:1px;height:37px;background:#d3c8ec;"></div>
<div class="a" style="left:1240px;top:196px;width:1px;height:31px;background:#d3c8ec;"></div>
<div class="a" style="left:1240px;top:230px;width:1px;height:31px;background:#d3c8ec;"></div>
<div class="a" style="left:1240px;top:264px;width:1px;height:31px;background:#d3c8ec;"></div>
<div class="a" style="left:1240px;top:298px;width:1px;height:20px;background:#d3c8ec;"></div>
<div class="a" style="left:1240px;top:321px;width:1px;height:20px;background:#d3c8ec;"></div>
<div class="a" style="left:1360px;top:135px;width:1px;height:37px;background:#d3c8ec;"></div>
<div class="a" style="left:1360px;top:196px;width:1px;height:31px;background:#d3c8ec;"></div>
<div class="a" style="left:1360px;top:230px;width:1px;height:31px;background:#d3c8ec;"></div>
<div class="a" style="left:1360px;top:264px;width:1px;height:31px;background:#d3c8ec;"></div>
<div class="a" style="left:1360px;top:298px;width:1px;height:20px;background:#d3c8ec;"></div>
<div class="a" style="left:1360px;top:321px;width:1px;height:20px;background:#d3c8ec;"></div>
<div class="a" style="left:381px;top:172px;width:1019px;height:18px;background:#ebebeb;border:2px solid #4527a0;border-right:none;"></div>
<svg style="left:486px;top:212px" width="9" height="10" viewBox="0 0 9 10"><rect x="0.500" y="0.500" width="8" height="8.600" fill="#fff" stroke="#4a30a2" stroke-width="1"/><rect x="0" y="8.600" width="9" height="1" fill="#7a66c2"/><rect x="2.300" y="4" width="4.600" height="1.100" fill="#3f2a98"/><rect x="4" y="2.200" width="1.100" height="4.700" fill="#3f2a98"/></svg>
<svg style="left:486px;top:246px" width="9" height="10" viewBox="0 0 9 10"><rect x="0.500" y="0.500" width="8" height="8.600" fill="#fff" stroke="#4a30a2" stroke-width="1"/><rect x="0" y="8.600" width="9" height="1" fill="#7a66c2"/><rect x="2.300" y="4" width="4.600" height="1.100" fill="#3f2a98"/><rect x="4" y="2.200" width="1.100" height="4.700" fill="#3f2a98"/></svg>
<svg style="left:486px;top:280px" width="9" height="10" viewBox="0 0 9 10"><rect x="0.500" y="0.500" width="8" height="8.600" fill="#fff" stroke="#4a30a2" stroke-width="1"/><rect x="0" y="8.600" width="9" height="1" fill="#7a66c2"/><rect x="2.300" y="4" width="4.600" height="1.100" fill="#3f2a98"/><rect x="4" y="2.200" width="1.100" height="4.700" fill="#3f2a98"/></svg>
<svg style="left:486px;top:303px" width="9" height="10" viewBox="0 0 9 10"><rect x="0.500" y="0.500" width="8" height="8.600" fill="#fff" stroke="#4a30a2" stroke-width="1"/><rect x="0" y="8.600" width="9" height="1" fill="#7a66c2"/><rect x="2.300" y="4" width="4.600" height="1.100" fill="#3f2a98"/><rect x="4" y="2.200" width="1.100" height="4.700" fill="#3f2a98"/></svg>
<svg style="left:486px;top:326px" width="9" height="10" viewBox="0 0 9 10"><rect x="0.500" y="0.500" width="8" height="8.600" fill="#fff" stroke="#4a30a2" stroke-width="1"/><rect x="0" y="8.600" width="9" height="1" fill="#7a66c2"/><rect x="2.300" y="4" width="4.600" height="1.100" fill="#3f2a98"/><rect x="4" y="2.200" width="1.100" height="4.700" fill="#3f2a98"/></svg>
<div class="a" style="left:381.5px;top:775.8px;width:1020px;height:1px;background:#cdc1ea;"></div>
<div class="a" style="left:381.5px;top:782.2px;width:1006.5px;height:1px;background:#cdc1ea;"></div>
<div class="a" style="left:1387.5px;top:776px;width:1px;height:7px;background:#cdc1ea;"></div>
<div class="a" style="left:381.5px;top:776.3px;width:740.5px;height:6px;background:#a898d8;border-radius:0 3px 3px 0;"></div>
<div class="a" style="left:1392px;top:782px;width:3px;height:3px;background:#b8b8b8;border-radius:50%;"></div>
<div class="a" style="left:1387px;top:787px;width:3px;height:3px;background:#b8b8b8;border-radius:50%;"></div>
<div class="a" style="left:1392px;top:787px;width:3px;height:3px;background:#b8b8b8;border-radius:50%;"></div>
<div class="a" style="left:1382px;top:792px;width:3px;height:3px;background:#b8b8b8;border-radius:50%;"></div>
<div class="a" style="left:1387px;top:792px;width:3px;height:3px;background:#b8b8b8;border-radius:50%;"></div>
<div class="a" style="left:1392px;top:792px;width:3px;height:3px;background:#b8b8b8;border-radius:50%;"></div>
<div class="t" style="top:6.50px;font-size:13px;line-height:16px;left:14.40px;color:#fff;letter-spacing:0.184px;">Поиск</div>
<div class="t" style="top:55.50px;font-size:13px;line-height:16px;left:58.20px;font-weight:bold;color:#111;transform:scaleX(0.875);transform-origin:0 50%;">кирпич</div>
<div class="t" style="top:54.70px;font-size:13px;line-height:16px;left:1178.00px;color:#000;letter-spacing:-0.322px;-webkit-text-stroke:0.1px #000;">Настройка поиска</div>
<div class="t" style="top:108.00px;font-size:14px;line-height:18px;left:62.90px;font-weight:bold;color:#111;letter-spacing:-0.388px;">Расценки</div>
<div class="t" style="top:108.20px;font-size:14px;line-height:18px;left:235.00px;color:#606060;letter-spacing:-0.070px;">Материальные ресурсы</div>
<div class="t" style="top:108.20px;font-size:14px;line-height:18px;left:502.40px;color:#606060;letter-spacing:-0.068px;">Машины</div>
<div class="t" style="top:142.00px;font-size:11px;line-height:14px;left:85.30px;letter-spacing:0.008px;">СН-2012 (в текущих ценах по состоянию на</div>
<div class="t" style="top:156.00px;font-size:11px;line-height:14px;left:85.30px;letter-spacing:0.031px;">01.10.2022 года) (1016)</div>
<div class="t" style="top:181.00px;font-size:11px;line-height:14px;left:103.30px;letter-spacing:0.156px;">Нормативы (1016)</div>
<div class="t" style="top:210.00px;font-size:11px;line-height:14px;left:121.00px;letter-spacing:0.082px;">Дополнение 1 (508)</div>
<div class="t" style="top:239.00px;font-size:11px;line-height:14px;left:139.40px;">1. Здания (489)</div>
<div class="t" style="top:268.00px;font-size:11px;line-height:14px;left:157.30px;letter-spacing:0.056px;">2 - Фундаменты и стены подвалов (3)</div>
<div class="t" style="top:297.70px;font-size:11px;line-height:14px;left:157.30px;letter-spacing:0.115px;">3 - Конструкции подземной части (5)</div>
<div class="t" style="top:327.60px;font-size:11px;line-height:14px;left:157.30px;letter-spacing:0.006px;">4 - Каркас (81)</div>
<div class="t" style="top:357.70px;font-size:11px;line-height:14px;left:157.30px;letter-spacing:0.012px;">5 - Стены наружные и внутренние (177)</div>
<div class="t" style="top:387.80px;font-size:11px;line-height:14px;left:157.30px;letter-spacing:0.009px;">6 - Перекрытия (19)</div>
<div class="t" style="top:418.00px;font-size:11px;line-height:14px;left:157.30px;letter-spacing:0.027px;">8 - Перегородки (6)</div>
<div class="t" style="top:448.00px;font-size:11px;line-height:14px;left:157.30px;letter-spacing:-0.047px;">10 - Полы (13)</div>
<div class="t" style="top:478.00px;font-size:11px;line-height:14px;left:157.30px;letter-spacing:-0.041px;">12 - Печи (14)</div>
<div class="t" style="top:508.00px;font-size:11px;line-height:14px;left:157.30px;letter-spacing:-0.005px;">13 - Внутренняя отделка (30)</div>
<div class="t" style="top:538.00px;font-size:11px;line-height:14px;left:157.30px;letter-spacing:0.022px;">14 - Наружная отделка (2)</div>
<div class="t" style="top:564.00px;font-size:11px;line-height:14px;left:157.30px;letter-spacing:0.032px;">24 - Технологическое оборудование и</div>
<div class="t" style="top:577.80px;font-size:11px;line-height:14px;left:157.30px;letter-spacing:0.105px;">трубопроводы (4)</div>
<div class="t" style="top:604.00px;font-size:11px;line-height:14px;left:157.30px;letter-spacing:-0.022px;">26 - Мебель, предметы интерьера  (3)</div>
<div class="t" style="top:634.00px;font-size:11px;line-height:14px;left:157.30px;letter-spacing:0.082px;">29 - Декоративные работы (2)</div>
<div class="t" style="top:664.00px;font-size:11px;line-height:14px;left:157.30px;letter-spacing:-0.005px;">49 - Снос, разборка зданий (1)</div>
<div class="t" style="top:694.00px;font-size:11px;line-height:14px;left:157.30px;letter-spacing:0.012px;">50 - Разные работы  (129)</div>
<div class="t" style="top:721.00px;font-size:11px;line-height:14px;left:139.50px;letter-spacing:0.064px;">2. Инженерные сооружения и</div>
<div class="t" style="top:734.80px;font-size:11px;line-height:14px;left:139.50px;letter-spacing:0.177px;">коммуникации (17)</div>
<div class="t" style="top:756.60px;font-size:11px;line-height:14px;left:139.50px;letter-spacing:0.090px;">5. Содержание объектов городской</div>
<div class="t" style="top:146.90px;font-size:12px;line-height:15px;left:387.00px;letter-spacing:-0.035px;-webkit-text-stroke:0.4px #212121;">Обоснование</div>
<div class="t" style="top:146.90px;font-size:12px;line-height:15px;left:507.00px;letter-spacing:0.057px;-webkit-text-stroke:0.4px #212121;">Наименование</div>
<div class="t" style="top:146.90px;font-size:12px;line-height:15px;left:1007.00px;letter-spacing:0.169px;-webkit-text-stroke:0.4px #212121;">Ед.изм.</div>
<div class="t" style="top:146.90px;font-size:12px;line-height:15px;left:1130.40px;letter-spacing:0.398px;-webkit-text-stroke:0.4px #212121;">Прямые затраты</div>
<div class="t" style="top:146.90px;font-size:12px;line-height:15px;left:1333.00px;letter-spacing:-0.090px;-webkit-text-stroke:0.4px #212121;">ЗП</div>
<div class="t" style="top:175.90px;font-size:11px;line-height:14px;left:387.00px;font-weight:bold;letter-spacing:-0.162px;">СН-2012. Дополнение 1 / 1. Здания / 3 - Конструкции подземной части</div>
<div class="t" style="top:198.00px;font-size:11px;line-height:14px;left:386.40px;letter-spacing:-0.130px;">1.3-3103-1-1/1</div>
<div class="t" style="top:198.00px;font-size:11px;line-height:14px;left:1006.30px;letter-spacing:0.041px;">100 м2</div>
<div class="t" style="top:232.00px;font-size:11px;line-height:14px;left:386.40px;letter-spacing:-0.130px;">1.3-3103-1-2/1</div>
<div class="t" style="top:232.00px;font-size:11px;line-height:14px;left:1006.30px;letter-spacing:0.041px;">100 м2</div>
<div class="t" style="top:266.00px;font-size:11px;line-height:14px;left:386.40px;letter-spacing:-0.130px;">1.3-3103-1-3/1</div>
<div class="t" style="top:266.00px;font-size:11px;line-height:14px;left:1006.30px;letter-spacing:0.041px;">100 м2</div>
<div class="t" style="top:300.00px;font-size:11px;line-height:14px;left:386.40px;letter-spacing:-0.130px;">1.3-3103-2-1/1</div>
<div class="t" style="top:300.00px;font-size:11px;line-height:14px;left:1006.30px;letter-spacing:0.041px;">100 м2</div>
<div class="t" style="top:322.70px;font-size:11px;line-height:14px;left:386.40px;letter-spacing:-0.130px;">1.3-3103-2-2/1</div>
<div class="t" style="top:322.70px;font-size:11px;line-height:14px;left:1006.30px;letter-spacing:0.041px;">100 м2</div>
<div class="t" style="top:198.00px;font-size:11px;line-height:14px;left:505.80px;letter-spacing:0.149px;">Устройство изоляционного слоя в цоколях существующих зданий при толщине цоколя в 2 <span class="hl">ки</span></div>
<div class="t" style="top:211.00px;font-size:11px;line-height:14px;left:505.80px;letter-spacing:0.298px;"><span class="hl">рпича</span></div>
<div class="t" style="top:232.00px;font-size:11px;line-height:14px;left:505.80px;letter-spacing:0.136px;">Устройство изоляционного слоя в цоколях существующих зданий при толщине цоколя в 2,5 <span class="hl">к</span></div>
<div class="t" style="top:245.00px;font-size:11px;line-height:14px;left:505.80px;letter-spacing:0.218px;"><span class="hl">ирпича</span></div>
<div class="t" style="top:266.00px;font-size:11px;line-height:14px;left:505.80px;letter-spacing:0.149px;">Устройство изоляционного слоя в цоколях существующих зданий при толщине цоколя в 3 <span class="hl">ки</span></div>
<div class="t" style="top:279.00px;font-size:11px;line-height:14px;left:505.80px;letter-spacing:0.298px;"><span class="hl">рпича</span></div>
<div class="t" style="top:300.00px;font-size:11px;line-height:14px;left:505.80px;letter-spacing:0.146px;">Устройство кирпичного цоколя в существующих зданиях толщиной в 0,5 <span class="hl">кирпича</span></div>
<div class="t" style="top:322.70px;font-size:11px;line-height:14px;left:505.80px;letter-spacing:0.176px;">Устройство кирпичного цоколя в существующих зданиях толщиной в 1 <span class="hl">кирпич</span></div>
<div class="t" style="top:198.00px;font-size:11px;line-height:14px;right:169.30px;letter-spacing:-0.071px;">70 026,90</div>
<div class="t" style="top:232.00px;font-size:11px;line-height:14px;right:169.30px;letter-spacing:-0.071px;">94 710,80</div>
<div class="t" style="top:266.00px;font-size:11px;line-height:14px;right:169.30px;letter-spacing:0.027px;">110 772,41</div>
<div class="t" style="top:300.00px;font-size:11px;line-height:14px;right:169.30px;letter-spacing:-0.058px;">198 071,17</div>
<div class="t" style="top:322.70px;font-size:11px;line-height:14px;right:169.30px;letter-spacing:-0.058px;">380 692,89</div>
<div class="t" style="top:198.00px;font-size:11px;line-height:14px;right:49.40px;letter-spacing:-0.071px;">22 818,05</div>
<div class="t" style="top:232.00px;font-size:11px;line-height:14px;right:49.40px;letter-spacing:-0.071px;">33 281,22</div>
<div class="t" style="top:266.00px;font-size:11px;line-height:14px;right:49.40px;letter-spacing:-0.071px;">36 103,86</div>
<div class="t" style="top:300.00px;font-size:11px;line-height:14px;right:49.40px;letter-spacing:-0.071px;">39 823,73</div>
<div class="t" style="top:322.70px;font-size:11px;line-height:14px;right:49.40px;letter-spacing:-0.071px;">62 614,10</div>
<div class="a" style="left:96.400px;top:286.300px;width:269px;height:31px;border:3px solid #ff0000;"></div>
<svg style="left:365px;top:280px" width="42" height="26" viewBox="0 0 42 26"><path d="M3.300 20.300 L20 14" stroke="#ff0000" stroke-width="3" fill="none"/><path d="M37.600 5 L13.300 7.400 L19.400 21.800 Z" fill="#ff0000"/></svg>
</body>
</html>
